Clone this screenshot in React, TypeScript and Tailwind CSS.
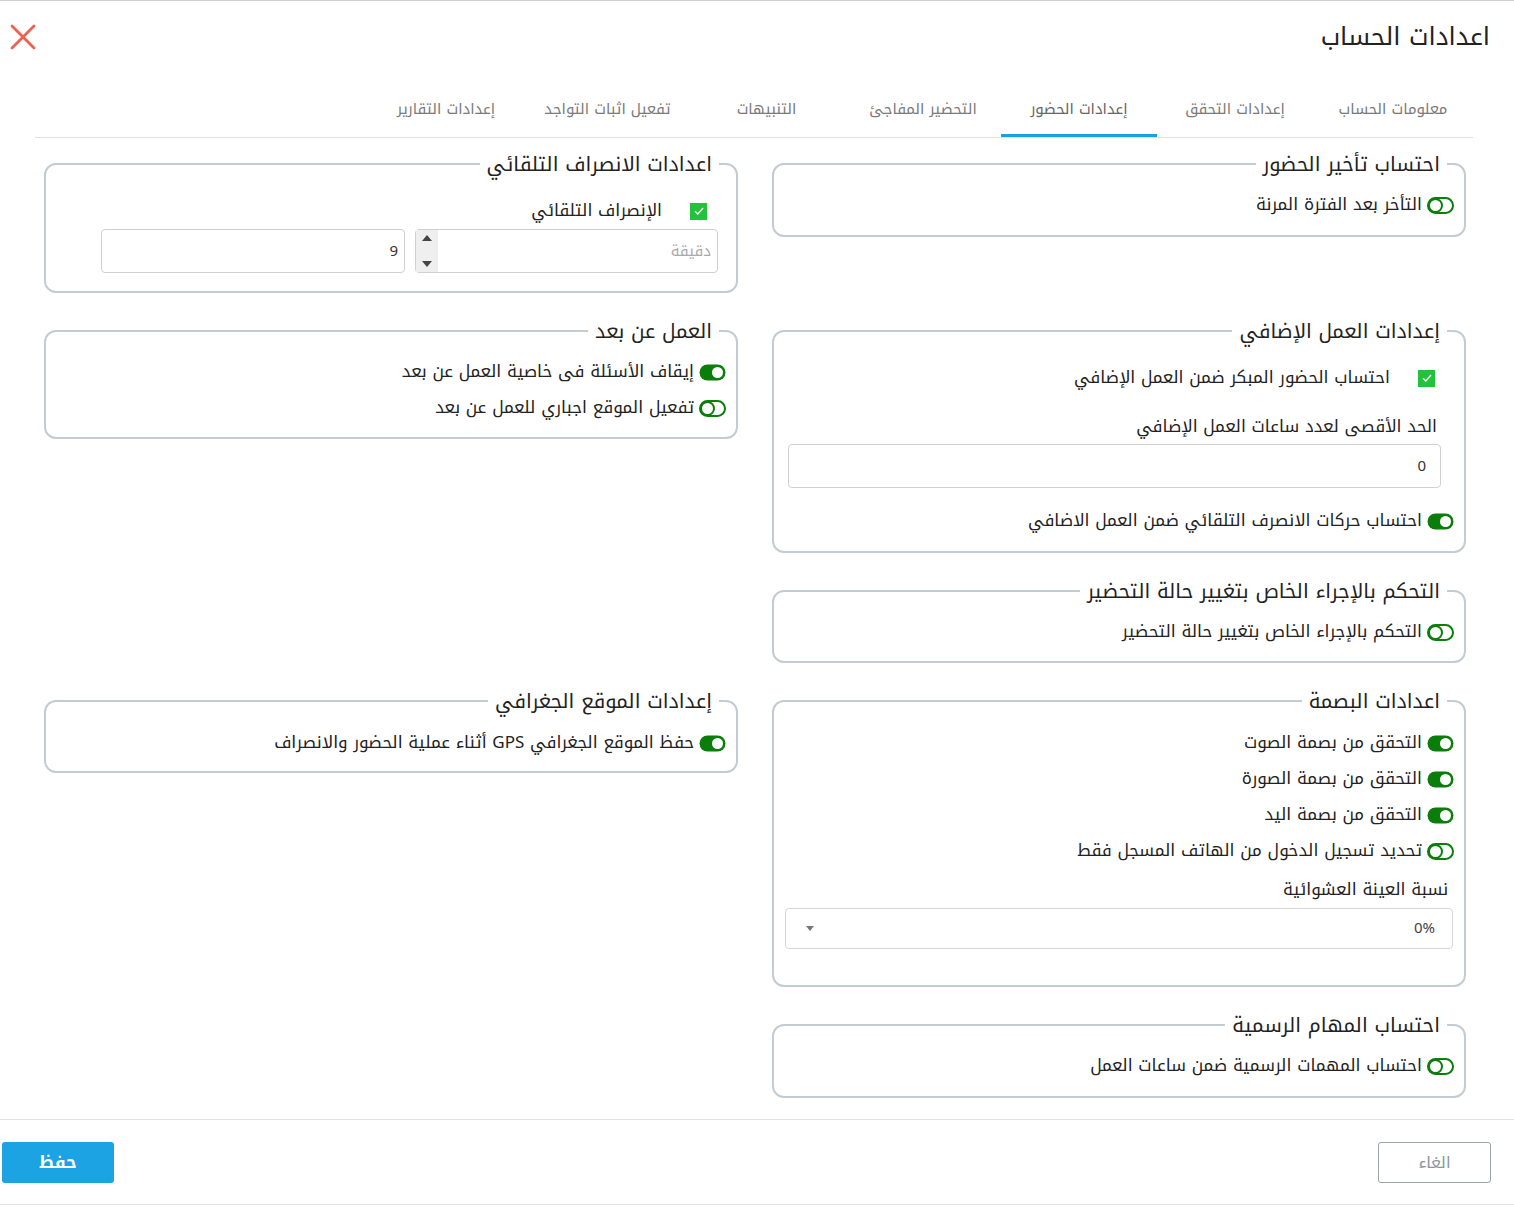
import React from "react";

const FONT = { fontFamily: '"Noto Kufi Arabic","Noto Sans Arabic","DejaVu Sans","Noto Sans",sans-serif' };

function Toggle({ on }: { on: boolean }) {
  return (
    <svg width="27" height="17" viewBox="0 0 27 17" className="shrink-0">
      {on ? (
        <>
          <rect x="0.5" y="0.5" width="26" height="16" rx="8" fill="#0b7d0b" />
          <circle cx="18.5" cy="8.5" r="5.5" fill="#fff" />
        </>
      ) : (
        <>
          <rect x="1" y="1" width="25" height="15" rx="7.5" fill="#fff" stroke="#0b7d0b" strokeWidth="2" />
          <circle cx="8.5" cy="8.5" r="6.5" fill="#fff" stroke="#0b7d0b" strokeWidth="2" />
        </>
      )}
    </svg>
  );
}

function ToggleRow({ on, label }: { on: boolean; label: string }) {
  return (
    <div className="h-9 flex items-center gap-[5px] text-[17px] text-[#222]">
      <Toggle on={on} />
      <span>{label}</span>
    </div>
  );
}

function Check() {
  return (
    <span className="w-[17px] h-[17px] bg-[#22c33a] flex items-center justify-center shrink-0">
      <svg width="12" height="12" viewBox="0 0 12 12">
        <path d="M2 6.3 L4.8 9 L10 3" fill="none" stroke="#fff" strokeWidth="1.4" />
      </svg>
    </span>
  );
}

function Box({ title, children, className = "" }: { title: string; children: React.ReactNode; className?: string }) {
  return (
    <fieldset className={"border-2 border-[#c3cbd3] rounded-[12px] px-[10px] min-w-0 " + className}>
      <legend className="mr-[7px] px-[7px] h-[30px] leading-[30px] text-[20px] text-[#222]">{title}</legend>
      {children}
    </fieldset>
  );
}

const tabs = [
  { t: "معلومات الحساب", w: 160 },
  { t: "إعدادات التحقق", w: 156 },
  { t: "إعدادات الحضور", w: 156, active: true },
  { t: "التحضير المفاجئ", w: 156 },
  { t: "التنبيهات", w: 157 },
  { t: "تفعيل اثبات التواجد", w: 161 },
  { t: "إعدادات التقارير", w: 162 },
];

export default function App() {
  return (
    <div dir="rtl" style={FONT} className="w-[1514px] h-[1207px] bg-white border-t border-[#cfcfcf] overflow-hidden">
      {/* Header */}
      <div className="h-[71px] flex items-center justify-between pr-[24px] pl-[10px]">
        <h1 className="text-[25px] text-[#222] leading-none">اعدادات الحساب</h1>
        <svg width="26" height="26" viewBox="0 0 26 26">
          <path d="M2 2 L24 24 M24 2 L2 24" stroke="#f0604d" strokeWidth="2.8" strokeLinecap="round" />
        </svg>
      </div>

      {/* Tabs */}
      <div className="mr-[41px] ml-[35px] border-b border-[#e0e0e0] flex">
        {tabs.map((tab) => (
          <div
            key={tab.t}
            style={{ width: tab.w }}
            className={
              "relative h-[65px] pt-[25px] text-center text-[15px] leading-6 " +
              (tab.active ? "text-[#666]" : "text-[#7a7a7a]")
            }
          >
            {tab.t}
            {tab.active && <div className="absolute bottom-0 right-0 left-0 h-[3px] bg-[#1a9fe0]" />}
          </div>
        ))}
      </div>

      {/* Content */}
      <div className="h-[981px] pt-[11px] pl-[44px] pr-[48px]">
        <div className="grid grid-cols-[694px_694px] gap-x-[34px] gap-y-[23px] items-start">
          {/* Row 1 */}
          <Box title="احتساب تأخير الحضور" className="pt-[8px] pb-[12px]">
            <ToggleRow on={false} label="التأخر بعد الفترة المرنة" />
          </Box>
          <Box title="اعدادات الانصراف التلقائي" className="pb-[18px]">
            <div className="mt-[17px] h-[30px] flex items-center mr-[19px] gap-[28px] text-[17px] text-[#222]">
              <Check />
              <span>الإنصراف التلقائي</span>
            </div>
            <div className="mt-[3px] mr-[8px] flex gap-[10px]">
              <div className="w-[303px] h-[44px] border border-[#d0d0d0] rounded-[4px] flex items-center">
                <span className="flex-1 pr-[6px] text-[15px] text-[#aaa]">دقيقة</span>
                <div className="w-[22px] h-[42px] bg-[#efefef] flex flex-col items-center justify-between py-[5px]">
                  <span className="w-0 h-0 border-l-[5px] border-r-[5px] border-b-[6px] border-l-transparent border-r-transparent border-b-[#444]" />
                  <span className="w-0 h-0 border-l-[5px] border-r-[5px] border-t-[6px] border-l-transparent border-r-transparent border-t-[#444]" />
                </div>
              </div>
              <div className="w-[304px] h-[44px] border border-[#d0d0d0] rounded-[4px] flex items-center pr-[6px] text-[15px] text-[#333]">
                9
              </div>
            </div>
          </Box>

          {/* Row 2 */}
          <Box title="إعدادات العمل الإضافي" className="pb-[12px]">
            <div className="mt-[14px] h-9 flex items-center mr-[19px] gap-[28px] text-[17px] text-[#222]">
              <Check />
              <span>احتساب الحضور المبكر ضمن العمل الإضافي</span>
            </div>
            <div className="mt-[16px] h-[30px] flex items-center mr-[17px] text-[17px] text-[#222]">
              الحد الأقصى لعدد ساعات العمل الإضافي
            </div>
            <div className="mt-[2px] mr-[13px] ml-[4px] h-[44px] border border-[#d0d0d0] rounded-[4px] flex items-center pr-[14px] text-[15px] text-[#333]">
              0
            </div>
            <div className="mt-[15px]">
              <ToggleRow on={true} label="احتساب حركات الانصرف التلقائي ضمن العمل الاضافي" />
            </div>
          </Box>
          <Box title="العمل عن بعد" className="pt-[8px] pb-[11px]">
            <ToggleRow on={true} label="إيقاف الأسئلة فى خاصية العمل عن بعد" />
            <ToggleRow on={false} label="تفعيل الموقع اجباري للعمل عن بعد" />
          </Box>

          {/* Row 3 */}
          <Box title="التحكم بالإجراء الخاص بتغيير حالة التحضير" className="pt-[8px] pb-[11px]">
            <ToggleRow on={false} label="التحكم بالإجراء الخاص بتغيير حالة التحضير" />
          </Box>
          <div />

          {/* Row 4 */}
          <Box title="اعدادات البصمة" className="pt-[9px] pb-[36px]">
            <ToggleRow on={true} label="التحقق من بصمة الصوت" />
            <ToggleRow on={true} label="التحقق من بصمة الصورة" />
            <ToggleRow on={true} label="التحقق من بصمة اليد" />
            <ToggleRow on={false} label="تحديد تسجيل الدخول من الهاتف المسجل فقط" />
            <div className="mt-[6px] h-[30px] flex items-center mr-[6px] text-[17px] text-[#222]">
              نسبة العينة العشوائية
            </div>
            <div className="mt-[3px] mx-[1px] h-[41px] border border-[#d6d6d6] rounded-[4px] flex items-center justify-between pr-[17px] pl-[20px] text-[15px] text-[#444]">
              <span>0%</span>
              <span className="w-0 h-0 border-l-[4px] border-r-[4px] border-t-[5px] border-l-transparent border-r-transparent border-t-[#777]" />
            </div>
          </Box>
          <Box title="إعدادات الموقع الجغرافي" className="pt-[9px] pb-[10px]">
            <ToggleRow on={true} label="حفظ الموقع الجغرافي GPS أثناء عملية الحضور والانصراف" />
          </Box>

          {/* Row 5 */}
          <Box title="احتساب المهام الرسمية" className="pt-[8px] pb-[12px]">
            <ToggleRow on={false} label="احتساب المهمات الرسمية ضمن ساعات العمل" />
          </Box>
          <div />
        </div>
      </div>

      {/* Footer */}
      <div className="border-t border-b border-[#e3e3e3] pt-[22px] pb-[21px] pr-[23px] pl-[2px] flex justify-between">
        <button className="w-[113px] h-[41px] border border-[#9aa5ad] rounded-[3px] bg-white text-[#8a959c] text-[16px]">
          الغاء
        </button>
        <button className="w-[112px] h-[41px] rounded-[3px] bg-[#1ca3e3] text-white text-[17px] font-bold">
          حفظ
        </button>
      </div>
    </div>
  );
}
